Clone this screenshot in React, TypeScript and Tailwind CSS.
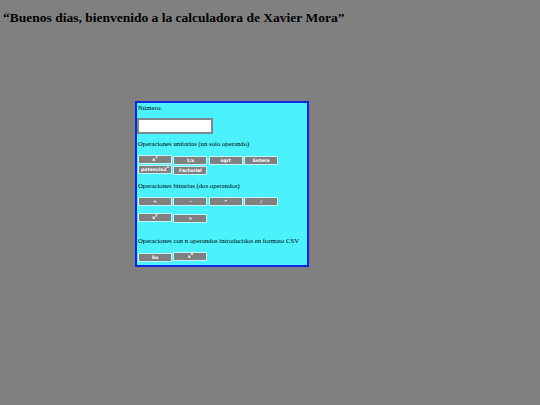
const btn =
  "w-[34px] h-[9px] bg-[#808080] border border-[#c4f4f6] text-white font-bold text-[4.6px] leading-[7px] text-center font-['DejaVu_Sans',sans-serif] flex items-center justify-center";

function Btn({ children, up }: { children: React.ReactNode; up?: boolean }) {
  return <button className={up ? btn + " -translate-y-px" : btn}>{children}</button>;
}

function Sup({ children }: { children: string }) {
  return <sup className="text-[3.5px] leading-none -top-[1.5px] relative align-baseline">{children}</sup>;
}

export default function App() {
  return (
    <div className="w-[540px] h-[405px] overflow-hidden bg-[#808080] font-['Liberation_Serif',serif] text-black">
      <h1 className="pt-[10px] pl-[3px] text-[13.5px] leading-[15px] font-bold">
        “Buenos días, bienvenido a la calculadora de Xavier Mora”
      </h1>
      <div className="ml-[135px] mt-[76px] w-[174px] h-[166px] border-2 border-[#0a28e0] bg-[#4bf2fb] pl-px text-[6.75px] leading-[8px]">
        <p className="pt-[1px]">Número:</p>
        <input
          className="block mt-[6px] -ml-px w-[76px] h-[16px] bg-white border-2 border-[#7a8a8c] outline-none"
          readOnly
        />
        <p className="mt-[6px]">Operaciones unitarias (un solo operando)</p>
        <div className="mt-[8px] flex gap-[1.4px]">
          <Btn up>
            x<Sup>2</Sup>
          </Btn>
          <Btn>1/x</Btn>
          <Btn>sqrt</Btn>
          <Btn>Entera</Btn>
        </div>
        <div className="mt-px flex gap-[1.4px]">
          <Btn up>
            potencia2<Sup>x</Sup>
          </Btn>
          <Btn>Factorial</Btn>
        </div>
        <p className="mt-[7px]">Operaciones binarias (dos operandos)</p>
        <div className="mt-[7px] flex gap-[1.4px]">
          <Btn>+</Btn>
          <Btn>-</Btn>
          <Btn>*</Btn>
          <Btn>/</Btn>
        </div>
        <div className="mt-[8px] flex gap-[1.4px]">
          <Btn up>
            x<Sup>y</Sup>
          </Btn>
          <Btn>=</Btn>
        </div>
        <p className="mt-[14px]">Operaciones con n operandos introducidos en formato CSV</p>
        <div className="mt-[8px] flex gap-[1.4px]">
          <Btn>Su</Btn>
          <Btn up>
            x<Sup>n</Sup>
          </Btn>
        </div>
      </div>
    </div>
  );
}
